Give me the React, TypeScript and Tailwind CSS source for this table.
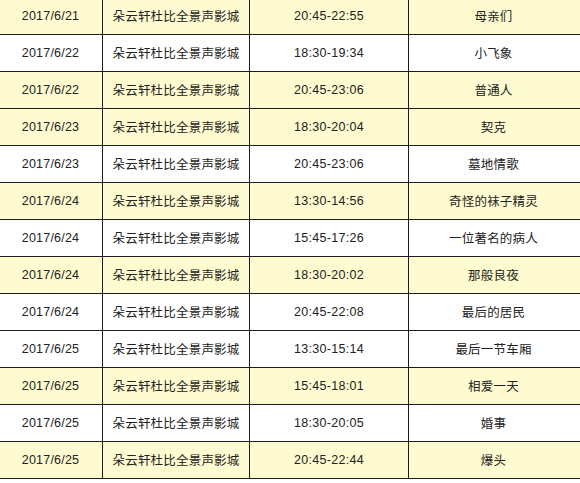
import React from 'react';

type Row = { date: string; time: string; film: string; hl: boolean };

const rows: Row[] = [
  { date: '2017/6/21', time: '20:45-22:55', film: '母亲们', hl: true },
  { date: '2017/6/22', time: '18:30-19:34', film: '小飞象', hl: false },
  { date: '2017/6/22', time: '20:45-23:06', film: '普通人', hl: true },
  { date: '2017/6/23', time: '18:30-20:04', film: '契克', hl: true },
  { date: '2017/6/23', time: '20:45-23:06', film: '墓地情歌', hl: false },
  { date: '2017/6/24', time: '13:30-14:56', film: '奇怪的袜子精灵', hl: true },
  { date: '2017/6/24', time: '15:45-17:26', film: '一位著名的病人', hl: false },
  { date: '2017/6/24', time: '18:30-20:02', film: '那般良夜', hl: true },
  { date: '2017/6/24', time: '20:45-22:08', film: '最后的居民', hl: false },
  { date: '2017/6/25', time: '13:30-15:14', film: '最后一节车厢', hl: false },
  { date: '2017/6/25', time: '15:45-18:01', film: '相爱一天', hl: true },
  { date: '2017/6/25', time: '18:30-20:05', film: '婚事', hl: false },
  { date: '2017/6/25', time: '20:45-22:44', film: '爆头', hl: true },
];

const CINEMA = '朵云轩杜比全景声影城';

export default function App() {
  return (
    <div className="h-[483px] w-[580px] overflow-hidden bg-white text-[#222]">
      <div className="-mt-[2px] flex flex-col">
        {rows.map((r, i) => (
          <div
            key={i}
            className={`grid h-[37px] grid-cols-[103px_147px_159px_1fr] border-b border-[#1c1c1c] ${
              r.hl ? 'bg-[#fffbd0]' : 'bg-white'
            }`}
          >
            <div className="flex items-center justify-center border-r border-[#1c1c1c] pr-[1px] font-['Liberation_Sans',sans-serif] text-[12.5px] tracking-[0.2px]">
              {r.date}
            </div>
            <div className="flex items-center justify-center border-r border-[#1c1c1c] font-['Noto_Sans_CJK_SC',sans-serif] text-[12.5px] tracking-[0.2px]">
              {CINEMA}
            </div>
            <div className="flex items-center justify-center border-r border-[#1c1c1c] font-['Liberation_Sans',sans-serif] text-[12.5px] tracking-[0.3px]">
              {r.time}
            </div>
            <div className="flex items-center justify-center pr-[2px] font-['Noto_Sans_CJK_SC',sans-serif] text-[12.5px] tracking-[0.2px]">
              {r.film}
            </div>
          </div>
        ))}
      </div>
    </div>
  );
}
